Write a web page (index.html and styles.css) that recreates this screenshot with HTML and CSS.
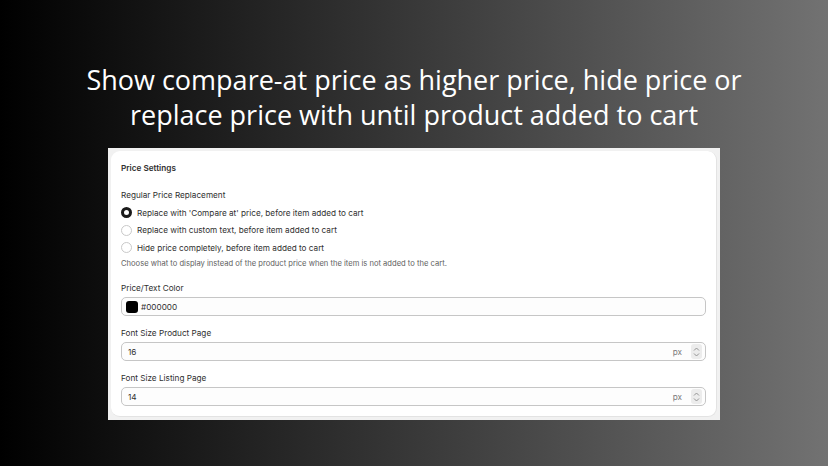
FILE: index.html
```html
<!DOCTYPE html>
<html lang="en">

<head>
    <meta charset="UTF-8">
    <meta name="viewport" content="width=device-width, initial-scale=1.0">
    <title>Price Settings</title>
    <link rel="stylesheet" href="styles.css">
</head>

<body>

    <h1 class="headline">Show compare-at price as higher price, hide price or<br>replace price with until product added to cart</h1>

    <div class="frame">
        <div class="card">
            <h2 class="card-title">Price Settings</h2>

            <div class="field-label">Regular Price Replacement</div>
            <div class="options">
                <label class="option">
                    <span class="radio checked"></span>
                    Replace with 'Compare at' price, before item added to cart
                </label>
                <label class="option">
                    <span class="radio"></span>
                    Replace with custom text, before item added to cart
                </label>
                <label class="option">
                    <span class="radio"></span>
                    Hide price completely, before item added to cart
                </label>
            </div>
            <div class="help">Choose what to display instead of the product price when the item is not added to the cart.</div>

            <div class="form-group first">
                <div class="field-label">Price/Text Color</div>
                <div class="input">
                    <span class="swatch"></span>
                    <span class="value">#000000</span>
                </div>
            </div>

            <div class="form-group">
                <div class="field-label">Font Size Product Page</div>
                <div class="input number">
                    <span class="value">16</span>
                    <span class="suffix">px</span>
                    <span class="spinner">
                        <svg width="7" height="12" viewBox="0 0 7 12">
                            <path d="M1 4.5 L3.5 2 L6 4.5 M1 7.5 L3.5 10 L6 7.5" fill="none" stroke="#8a8a8a" stroke-width="0.9" />
                        </svg>
                    </span>
                </div>
            </div>

            <div class="form-group">
                <div class="field-label">Font Size Listing Page</div>
                <div class="input number">
                    <span class="value">14</span>
                    <span class="suffix">px</span>
                    <span class="spinner">
                        <svg width="7" height="12" viewBox="0 0 7 12">
                            <path d="M1 4.5 L3.5 2 L6 4.5 M1 7.5 L3.5 10 L6 7.5" fill="none" stroke="#8a8a8a" stroke-width="0.9" />
                        </svg>
                    </span>
                </div>
            </div>
        </div>
    </div>

</body>

</html>
```

FILE: styles.css
```css
html,
body {
    margin: 0;
    height: 100%;
}

body {
    font-family: Inter, "Noto Sans", sans-serif;
    background: linear-gradient(90deg, #000000 0%, #1c1c1c 25%, #3e3e3e 55%, #727272 100%);
    overflow: hidden;
}

.headline {
    margin: 0;
    padding-top: 62px;
    font-family: "Open Sans", Roboto, sans-serif;
    font-weight: 400;
    font-size: 27px;
    line-height: 35px;
    color: #ffffff;
    text-align: center;
}

.frame {
    width: 606px;
    height: 266px;
    margin: 16px auto 0;
    padding: 3px;
    background-color: #f1f1f1;
}

.card {
    height: 100%;
    box-sizing: border-box;
    padding: 11px 10px 10px;
    background-color: #ffffff;
    border-radius: 9px;
    border-right: 1px solid #e3e3e3;
    border-bottom: 1px solid #e3e3e3;
    color: #303030;
    font-size: 8.2px;
    line-height: 12px;
}

.card-title {
    margin: 0 0 15px;
    font-size: 8.2px;
    line-height: 12px;
    font-weight: 600;
}

.field-label {
    color: #303030;
}

.options {
    margin-top: 3px;
}

.option {
    display: flex;
    align-items: center;
    height: 17.5px;
}

.radio {
    width: 11px;
    height: 11px;
    box-sizing: border-box;
    margin-right: 5px;
    border: 1px solid #c9c9c9;
    border-radius: 50%;
}

.radio.checked {
    border: 3.5px solid #1a1a1a;
}

.help {
    margin-top: 1.5px;
    font-size: 7.6px;
    color: #616161;
}

.form-group {
    margin-top: 11px;
}

.form-group.first {
    margin-top: 12px;
}

.form-group .field-label {
    margin-bottom: 3px;
}

.input {
    display: flex;
    align-items: center;
    height: 19px;
    box-sizing: border-box;
    padding: 0 3px 0 4px;
    border: 1px solid #c6c6c6;
    border-radius: 5px;
    background-color: #fdfdfd;
}

.input.number {
    padding-left: 6px;
}

.swatch {
    width: 12px;
    height: 12px;
    margin-right: 3px;
    border-radius: 3px;
    background-color: #000000;
}

.value {
    flex: 1;
    color: #303030;
}

.suffix {
    margin-right: 9px;
    color: #7a7a7a;
}

.spinner {
    display: flex;
    align-items: center;
    justify-content: center;
    width: 11px;
    height: 15px;
    border-radius: 3px;
    background-color: #ececec;
}
```
